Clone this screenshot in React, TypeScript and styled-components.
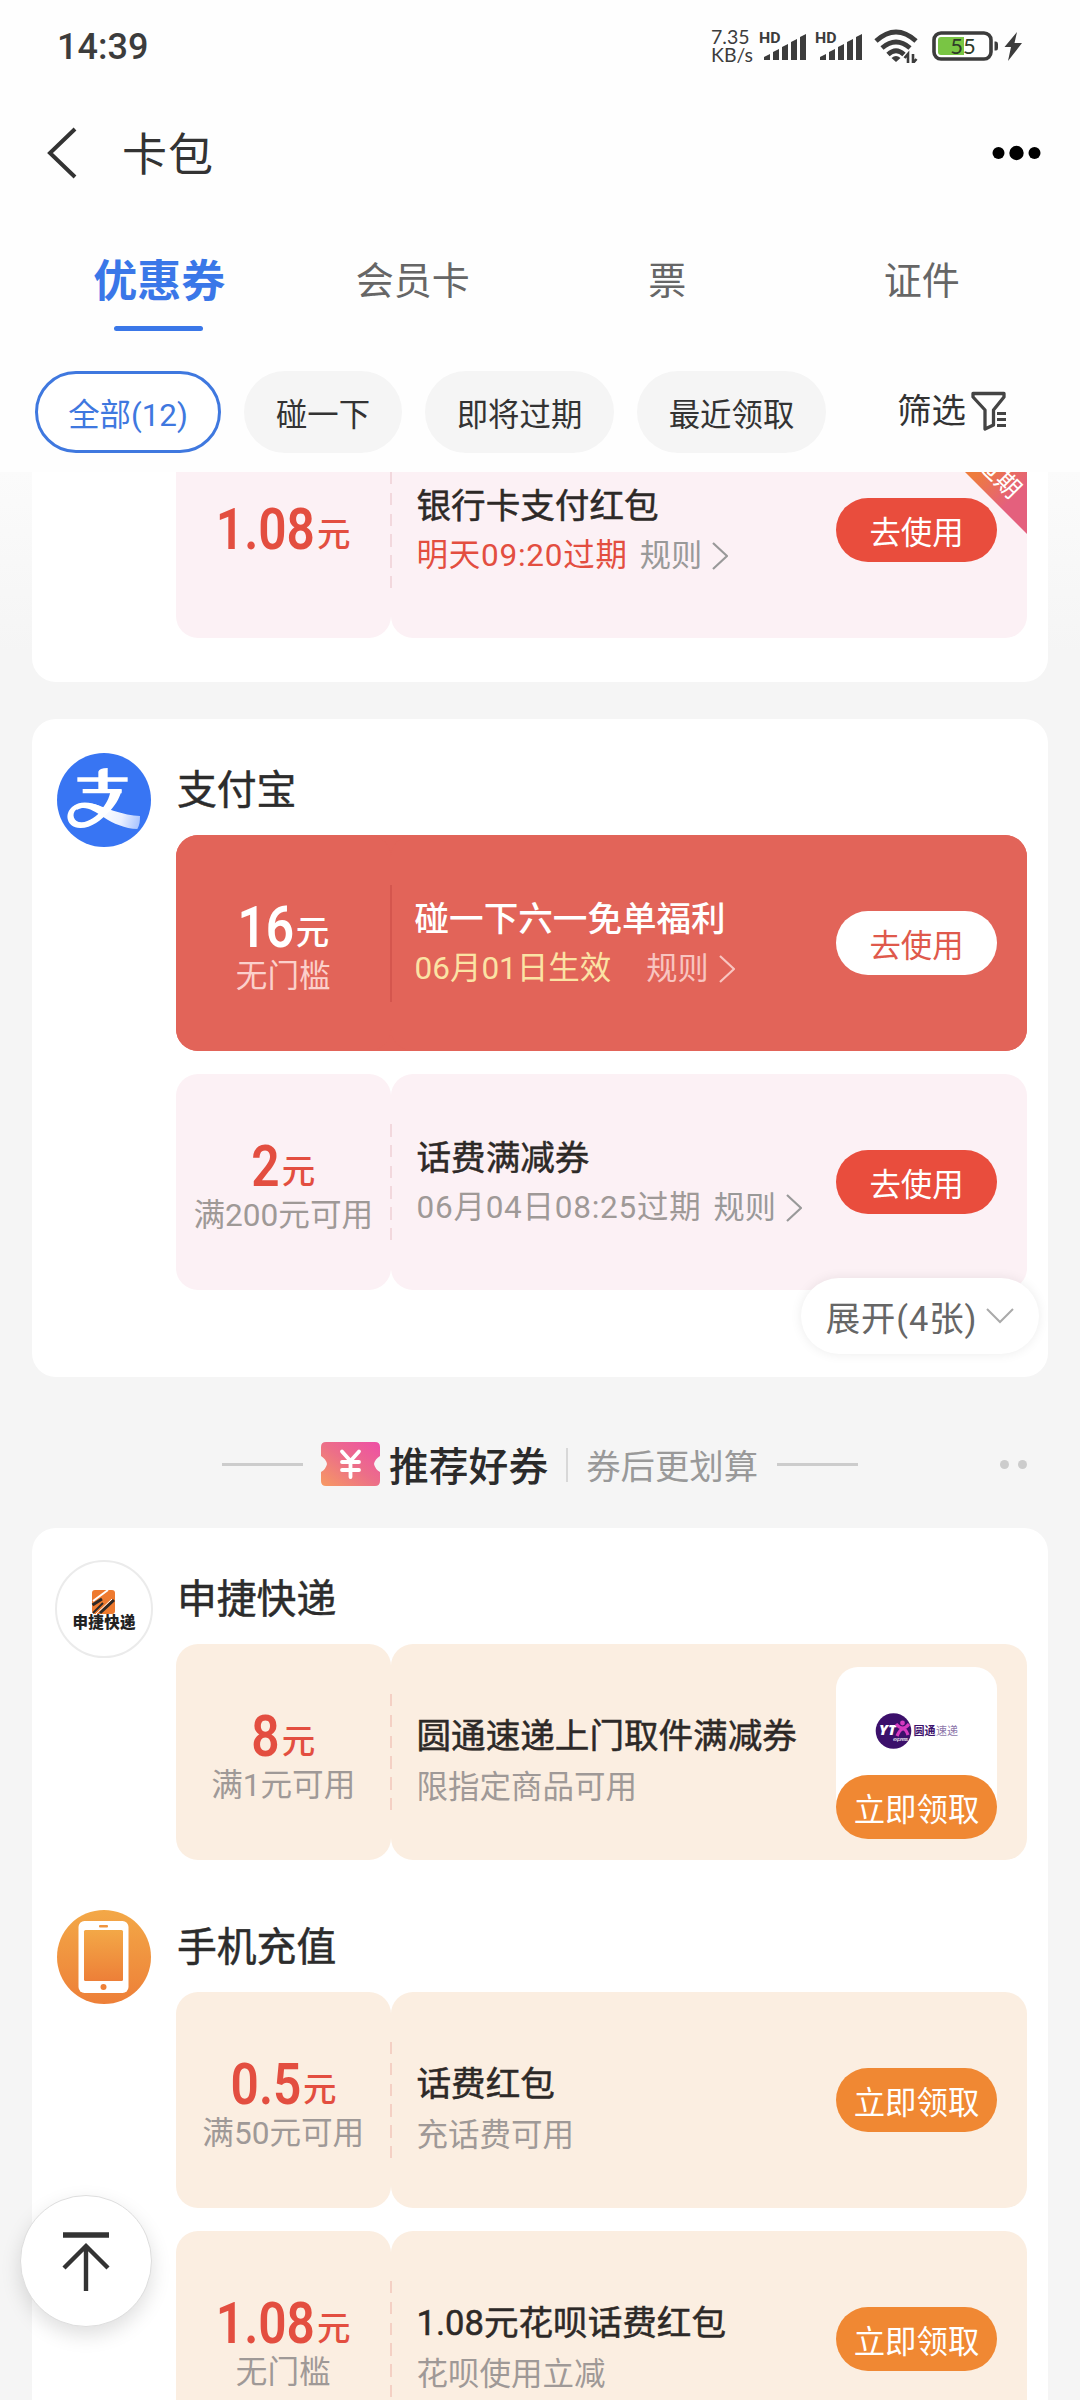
import React from "react";
import styled, { createGlobalStyle, css } from "styled-components";

const GlobalStyle = createGlobalStyle`
  * { box-sizing: border-box; }
  html, body { margin: 0; padding: 0; background: #f5f5f5; }
  body { font-family: Roboto, "Noto Sans CJK SC", sans-serif; color: #333; }
`;

const Screen = styled.div`
  width: 1080px;
  height: 2400px;
  overflow: hidden;
  display: flex;
  flex-direction: column;
  position: relative;
  background: #f5f5f5;
`;

const Header = styled.header`
  flex: none;
  height: 472px;
  background: #fefefe;
  display: flex;
  flex-direction: column;
`;

/* ---------- status bar ---------- */
const StatusBar = styled.div`
  height: 92px;
  padding: 0 58px 0 57px;
  display: flex;
  align-items: center;
  justify-content: space-between;
`;
const Clock = styled.div`
  font-size: 36px;
  font-weight: 500;
  line-height: 40px;
  padding-top: 1px;
  color: #3c3c3c;
`;
const StatusIcons = styled.div`
  display: flex;
  align-items: center;
`;
const NetSpeed = styled.div`
  width: 48px;
  font-family: Lato, Roboto, sans-serif;
  font-size: 19.5px;
  line-height: 18px;
  color: #3c3c3c;
  white-space: nowrap;
`;
const SignalSvg = styled.svg`
  width: 48px;
  height: 32px;
  margin-right: 8px;
  overflow: visible;
`;
const WifiSvg = styled.svg`
  width: 45px;
  height: 34px;
  margin-left: 3px;
`;
const BatterySvg = styled.svg`
  width: 90px;
  height: 32px;
  margin-left: 13px;
`;

/* ---------- navigation ---------- */
const NavBar = styled.div`
  height: 122px;
  padding: 0 38px 0 46px;
  display: flex;
  align-items: center;
`;
const BackSvg = styled.svg`
  width: 32px;
  height: 52px;
`;
const PageTitle = styled.h1`
  margin: 0 0 0 44px;
  padding-top: 5px;
  flex: 1;
  font-size: 45px;
  font-weight: 400;
  line-height: 60px;
  letter-spacing: 1px;
  color: #333;
`;
const MoreSvg = styled.svg`
  width: 50px;
  height: 18px;
`;

const Tabs = styled.nav`
  height: 157px;
  padding: 0 31px;
  display: grid;
  grid-template-columns: repeat(4, 1fr);
`;
const Tab = styled.div<{ $active?: boolean }>`
  display: flex;
  flex-direction: column;
  align-items: center;
  padding-top: 37px;
  font-size: ${(p) => (p.$active ? 44 : 38)}px;
  font-weight: ${(p) => (p.$active ? 700 : 400)};
  line-height: 60px;
  color: ${(p) => (p.$active ? "#3a77e8" : "#666")};
`;
const ActiveLabel = styled.span`
  padding: 1px 0 0 2px;
`;
const Indicator = styled.div`
  width: 89px;
  height: 5px;
  margin-top: 14px;
  border-radius: 3px;
  background: #3a77e8;
`;

const FilterRow = styled.div`
  height: 82px;
  padding-left: 35px;
  display: flex;
  gap: 23px;
`;
const Chip = styled.div<{ $width: number; $active?: boolean }>`
  width: ${(p) => p.$width}px;
  height: 82px;
  border-radius: 41px;
  display: flex;
  align-items: center;
  justify-content: center;
  font-size: 31.4px;
  white-space: nowrap;
  ${(p) =>
    p.$active
      ? css`
          border: 3px solid #3f78df;
          color: #3f78df;
          background: #fff;
        `
      : css`
          background: #f5f5f5;
          color: #333;
        `}
`;
const FilterButton = styled.div`
  margin-left: 48px;
  display: flex;
  align-items: center;
  gap: 4px;
  font-size: 34.5px;
  line-height: 50px;
  padding-bottom: 2px;
  color: #333;
`;
const FilterSvg = styled.svg`
  width: 38px;
  height: 40px;
`;

/* ---------- content ---------- */
const Content = styled.main`
  flex: 1;
  min-height: 0;
  overflow: hidden;
  display: flex;
  flex-direction: column;
  padding: 0 32px;
  background: linear-gradient(#fbfbfb, #f5f5f5 180px);
`;
const Card = styled.section<{ $bottom: number; $cut?: boolean }>`
  flex: none;
  background: #fff;
  border-radius: 24px;
  padding: 0 21px ${(p) => p.$bottom}px 21px;
  margin-top: ${(p) => (p.$cut ? -50 : 0)}px;
  position: relative;
`;
const Gap = styled.div`
  flex: none;
  height: 37px;
`;
const Group = styled.div<{ $spaced?: boolean }>`
  display: grid;
  grid-template-columns: 123px 851px;
  margin-top: ${(p) => (p.$spaced ? 16 : 0)}px;
`;
const LogoCell = styled.div`
  padding: 32px 0 0 2px;
`;
const LogoSvg = styled.svg`
  display: block;
  width: 98px;
  height: 98px;
`;
const GroupBody = styled.div`
  grid-column: 2;
`;
const BrandName = styled.h2`
  margin: 0;
  height: 116px;
  padding: 42px 0 0 1px;
  font-size: 39.8px;
  font-weight: 400;
  line-height: 60px;
  color: #2c2c2c;
  -webkit-text-stroke: 0.5px currentColor;
`;
const CouponList = styled.div`
  display: flex;
  flex-direction: column;
  gap: 23px;
`;

type Tone = "pink" | "hero" | "orange";
const surface = { pink: "#fcf1f5", hero: "#e26459", orange: "#fbeee1" };

const CouponBox = styled.div<{ $tone: Tone }>`
  height: 216px;
  display: flex;
  position: relative;
  border-radius: 22px;
  background: ${(p) => (p.$tone === "hero" ? surface.hero : "transparent")};
`;
const AmountPane = styled.div<{ $tone: Tone }>`
  width: 214.5px;
  border-radius: 22px;
  background: ${(p) => surface[p.$tone]};
  display: flex;
  flex-direction: column;
  align-items: center;
  justify-content: center;
  color: ${(p) => (p.$tone === "hero" ? "#fff" : "#e34e40")};
`;
const Amount = styled.div`
  display: flex;
  align-items: baseline;
  justify-content: center;
  height: 50px;
  line-height: 50px;
`;
const Digits = styled.span<{ $trim: number }>`
  display: block;
  font-size: 57px;
  font-weight: 600;
  transform: scaleX(0.87);
  transform-origin: right;
  margin-left: -${(p) => p.$trim}px;
`;
const Unit = styled.span`
  font-size: 33.5px;
  font-weight: 500;
  margin-left: 2px;
  transform: translateY(-3px);
`;
const Condition = styled.div<{ $tone: Tone }>`
  height: 40px;
  margin-bottom: -9px;
  line-height: 48px;
  font-size: 31.6px;
  white-space: nowrap;
  color: ${(p) => (p.$tone === "hero" ? "#fbd0cb" : "#9f9997")};
`;
const Divider = styled.div<{ $tone: Tone }>`
  width: 2px;
  height: 117px;
  margin: 50px -1px 0 -1px;
  z-index: 1;
  background: ${(p) =>
    p.$tone === "hero"
      ? "#d4564e"
      : `repeating-linear-gradient(${
          p.$tone === "pink" ? "#f2d8dd" : "#f4d0c4"
        } 0 12.5px, transparent 12.5px 20.8px)`};
`;
const InfoPane = styled.div<{ $tone: Tone }>`
  flex: 1;
  border-radius: 22px;
  background: ${(p) => surface[p.$tone]};
  display: flex;
  justify-content: space-between;
  padding: 0 30px 0 ${(p) => (p.$tone === "hero" ? 24 : 26)}px;
`;
const Info = styled.div<{ $tone: Tone }>`
  padding-top: ${(p) => (p.$tone === "orange" ? 67 : 59)}px;
  white-space: nowrap;
`;
const CouponTitle = styled.div<{ $tone: Tone }>`
  font-size: 34.6px;
  line-height: 50px;
  font-weight: ${(p) => (p.$tone === "hero" ? 500 : 400)};
  color: ${(p) => (p.$tone === "hero" ? "#fff" : "#2d2927")};
  -webkit-text-stroke: ${(p) => (p.$tone === "hero" ? 0 : 0.5)}px currentColor;
`;
const CouponSub = styled.div<{ $color: string; $tone: Tone }>`
  display: flex;
  align-items: center;
  height: 50px;
  margin-top: ${(p) => (p.$tone === "orange" ? 2 : 0)}px;
  line-height: 50px;
  font-size: 31.5px;
  letter-spacing: ${(p) => (p.$tone === "pink" ? 0.75 : 0)}px;
  color: ${(p) => p.$color};
`;
const Rule = styled.span<{ $tone: Tone }>`
  display: flex;
  align-items: center;
  letter-spacing: 0;
  margin-left: ${(p) => (p.$tone === "hero" ? 35 : 12)}px;
  font-size: 31.2px;
  color: ${(p) => (p.$tone === "hero" ? "#f8c5c0" : "#999")};
`;
const RuleSvg = styled.svg`
  width: 17px;
  height: 28px;
  margin-left: 9px;
`;
const ActionColumn = styled.div`
  width: 161px;
  display: flex;
  flex-direction: column;
  justify-content: center;
`;
const MerchantColumn = styled(ActionColumn)`
  justify-content: flex-start;
  padding-top: 23px;
`;
const MerchantBox = styled.div`
  height: 140px;
  margin-bottom: -32px;
  border-radius: 22px 22px 0 0;
  background: #fff;
  display: flex;
`;
const MerchantSvg = styled.svg`
  width: 161px;
  height: 108px;
`;
const Action = styled.div<{ $tone: Tone }>`
  height: 64px;
  border-radius: 32px;
  display: flex;
  align-items: center;
  justify-content: center;
  z-index: 1;
  font-size: 31.4px;
  background: ${(p) =>
    ({ pink: "#e94d3d", hero: "#fff", orange: "#f08833" })[p.$tone]};
  color: ${(p) => (p.$tone === "hero" ? "#df594c" : "#fff")};
`;
const Ribbon = styled.div`
  position: absolute;
  top: 0;
  right: 0;
  width: 112px;
  height: 112px;
  overflow: hidden;
  clip-path: polygon(0 0, 100% 0, 100% 100%);
  background: linear-gradient(135deg, #ee7c3c 50%, #e4607d 78%);
`;
const RibbonText = styled.span`
  position: absolute;
  left: 10px;
  top: 22px;
  width: 112px;
  text-align: center;
  transform: rotate(45deg);
  font-size: 25px;
  line-height: 30px;
  color: #fff;
  white-space: nowrap;
`;
const ExpandPill = styled.div`
  position: absolute;
  right: 9px;
  bottom: 23px;
  width: 238px;
  height: 76px;
  border-radius: 38px;
  background: #fff;
  box-shadow: 0 0 12px rgba(0, 0, 0, 0.08);
  display: flex;
  align-items: center;
  justify-content: center;
  gap: 9px;
  font-size: 34.4px;
  letter-spacing: 0.9px;
  color: #666;
`;
const ExpandSvg = styled.svg`
  width: 28px;
  height: 18px;
`;

const SectionHead = styled.div`
  flex: none;
  height: 151px;
  padding-top: 24px;
  display: flex;
  align-items: center;
  padding-left: 190px;
`;
const Rail = styled.div`
  width: 81px;
  height: 3px;
  background: #ccc;
`;
const TicketSvg = styled.svg`
  width: 59px;
  height: 44px;
  margin: -2px 9px 0 18px;
`;
const SectionTitle = styled.div`
  font-size: 39.8px;
  font-weight: 500;
  margin-top: -2px;
  color: #2b2b2b;
`;
const Split = styled.div`
  width: 2px;
  height: 34px;
  margin: 0 18px;
  background: #d8d8d8;
`;
const SectionNote = styled.div`
  font-size: 34.4px;
  color: #999;
  margin: -2px 19px 0 0;
`;
const SectionDots = styled.div`
  display: flex;
  gap: 9px;
  margin-left: 142px;
`;
const SmallDot = styled.i`
  width: 9px;
  height: 9px;
  border-radius: 50%;
  background: #ccc;
`;

const BackToTop = styled.button`
  position: absolute;
  left: 20px;
  top: 2195px;
  width: 132px;
  height: 132px;
  padding: 0;
  border: 1px solid #dedede;
  border-radius: 50%;
  background: #fff;
  box-shadow: 0 8px 20px rgba(0, 0, 0, 0.13);
  display: flex;
  align-items: center;
  justify-content: center;
`;
const TopSvg = styled.svg`
  width: 52px;
  height: 62px;
`;

/* ---------- icons ---------- */
function Signal() {
  return (
    <SignalSvg viewBox="0 0 48 32" fill="#3c3c3c">
      <text x="0" y="12.500" fontSize="14.500" fontWeight="700" fontFamily="Roboto" textLength="21.500" lengthAdjust="spacingAndGlyphs">HD</text>
      {[0, 1, 2, 3, 4].map((i) => {
        const x = 5 + i * 9;
        const y = 24 - i * 5;
        return <path key={i} d={`M${x} ${y + 3}L${x + 6} ${y}V30H${x}Z`} />;
      })}
    </SignalSvg>
  );
}

function Wifi() {
  return (
    <WifiSvg viewBox="0 0 45 34" fill="none" stroke="#3c3c3c" strokeWidth="4.800">
      <path d="M2 12Q22 -6 42 12" />
      <path d="M8 19Q22 7 36 19" />
      <path d="M14 25.500Q22 18 30 25.500" />
      <path d="M17.500 29Q22 25 26.500 29L22 33Z" fill="#3c3c3c" stroke="none" />
      <path d="M34 34V25L30.500 29M39 25V34L42.500 30" strokeWidth="2.600" />
    </WifiSvg>
  );
}

function Battery() {
  return (
    <BatterySvg viewBox="0 0 90 32">
      <rect x="2" y="3" width="57" height="26" rx="7" fill="#fff" stroke="#3c3c3c" strokeWidth="3.600" />
      <path d="M9 7H32V25H9Q6 25 6 22V10Q6 7 9 7Z" fill="#79c544" />
      <text x="31" y="24" fontSize="22" textAnchor="middle" fontFamily="Lato" fill="#2e3a28">55</text>
      <path d="M62.500 11.500H64Q66 11.500 66 14V18Q66 20.500 64 20.500H62.500Z" fill="#3c3c3c" />
      <path d="M85 2L72.500 17H79L76 31L90 13H82.500Z" fill="#3c3c3c" />
    </BatterySvg>
  );
}

function AlipayLogo() {
  return (
    <LogoSvg viewBox="15 18 294 294">
      <defs>
        <linearGradient id="tail" x1="150" y1="200" x2="268" y2="235" gradientUnits="userSpaceOnUse">
          <stop offset="0" stopColor="#fff" />
          <stop offset=".55" stopColor="#eaf0ff" />
          <stop offset="1" stopColor="#a9c4ff" />
        </linearGradient>
      </defs>
      <circle cx="162" cy="165" r="141" fill="#3875f3" />
      <path
        d="M66 188C100 158 148 182 190 197C220 206 245 212 270 213C270 228 269 240 262 252C225 251 190 236 160 216C130 196 105 180 82 194Z"
        fill="url(#tail)"
      />
      <path d="M82 97H233V110H82ZM98 132H215V145H98Z" fill="#fff" />
      <path d="M145 80Q147 70 173 69V138H145Z" fill="#fff" />
      <path d="M182 136H215C207 164 194 184 176 202L150 198C168 180 178 160 182 136Z" fill="#fff" />
      <path
        d="M178 198C155 226 122 250 90 249C50 247 42 207 66 186C90 165 122 171 152 184L150 200C122 188 96 180 78 194C64 206 70 232 95 232C118 230 140 214 156 194Z"
        fill="#fff"
      />
    </LogoSvg>
  );
}

function ShenjieLogo() {
  return (
    <LogoSvg viewBox="0 0 98 98">
      <circle cx="49" cy="49" r="48" fill="#fff" stroke="#ebebeb" strokeWidth="2" />
      <rect x="37" y="30" width="23" height="24" rx="3" fill="#ee7a2f" />
      <path d="M38 41L53 30" stroke="#fff" strokeWidth="2" />
      <path d="M37.500 45L47 39M45 53L59 40" stroke="#2d2926" strokeWidth="3" />
      <path d="M38 53L48 43" stroke="#2d2926" strokeWidth="2" />
      <path d="M41 54L57 39" stroke="#fff" strokeWidth="1" />
      <text x="49" y="68" fontSize="15.500" fontWeight="900" textAnchor="middle" fill="#222" fontFamily="Noto Sans CJK SC" textLength="63">
        申捷快递
      </text>
    </LogoSvg>
  );
}

function PhoneLogo() {
  return (
    <LogoSvg viewBox="0 0 98 98">
      <defs>
        <linearGradient id="phone" x1="0" y1="0" x2="0" y2="1">
          <stop offset="0" stopColor="#f3a847" />
          <stop offset="1" stopColor="#ed7f38" />
        </linearGradient>
      </defs>
      <circle cx="49" cy="49" r="47" fill="url(#phone)" />
      <rect x="23.500" y="13" width="50" height="72" rx="6" fill="#fff" />
      <rect x="29" y="22" width="39" height="51" rx="1.500" fill="url(#phone)" />
      <rect x="44" y="17" width="9" height="2.500" rx="1" fill="#f0953f" />
      <circle cx="48.500" cy="79" r="3" fill="#ee8138" />
    </LogoSvg>
  );
}

function YtoLogo() {
  return (
    <MerchantSvg viewBox="0 0 161 108">
      <circle cx="57.500" cy="64" r="17.800" fill="#3c106b" />
      <text x="43" y="68" fontSize="14" fontWeight="800" fontStyle="italic" fill="#fff" textLength="17" lengthAdjust="spacingAndGlyphs" fontFamily="Open Sans">YT</text>
      <path d="M60 57Q67 65 73 57M61 69Q64 62 67 62Q70 62 72 68" fill="none" stroke="#d63ac0" strokeWidth="3.200" />
      <circle cx="66.500" cy="56" r="2.400" fill="#d63ac0" />
      <text x="57" y="74" fontSize="6" fontStyle="italic" fill="#fff" textLength="15" fontFamily="Open Sans">express</text>
      <text y="67.500" fontSize="11" fontWeight="700" fontFamily="Noto Sans CJK SC">
        <tspan x="77.500" fill="#3c106b">圆通</tspan>
        <tspan x="100" fill="#8d76aa" fontWeight="400">速递</tspan>
      </text>
    </MerchantSvg>
  );
}

/* ---------- coupon ---------- */
interface CouponProps {
  tone: Tone;
  amount: string;
  condition?: string;
  title: string;
  sub: string;
  subColor?: string;
  rule?: boolean;
  ribbon?: boolean;
  merchant?: boolean;
}

// Width removed on the left by condensing the figures.
const trimFor = (text: string) =>
  [...text].reduce((w, c) => w + (c === "." ? 16 : 32.6), 0) * 0.13;

function Coupon({ tone, amount, condition, title, sub, subColor = "#9f9997", rule, ribbon, merchant }: CouponProps) {
  const action = <Action $tone={tone}>{tone === "orange" ? "立即领取" : "去使用"}</Action>;
  return (
    <CouponBox $tone={tone}>
      <AmountPane $tone={tone}>
        <Amount>
          <Digits $trim={trimFor(amount)}>{amount}</Digits>
          <Unit>元</Unit>
        </Amount>
        {condition && <Condition $tone={tone}>{condition}</Condition>}
      </AmountPane>
      <Divider $tone={tone} />
      <InfoPane $tone={tone}>
        <Info $tone={tone}>
          <CouponTitle $tone={tone}>{title}</CouponTitle>
          <CouponSub $color={subColor} $tone={tone}>
            {sub}
            {rule && (
              <Rule $tone={tone}>
                规则
                <RuleSvg viewBox="0 0 17 28" fill="none" stroke="currentColor" strokeWidth="2.200">
                  <path d="M2 1L16 14L2 27" />
                </RuleSvg>
              </Rule>
            )}
          </CouponSub>
        </Info>
        {merchant ? (
          <MerchantColumn>
            <MerchantBox>
              <YtoLogo />
            </MerchantBox>
            {action}
          </MerchantColumn>
        ) : (
          <ActionColumn>{action}</ActionColumn>
        )}
      </InfoPane>
      {ribbon && (
        <Ribbon>
          <RibbonText>即将过期</RibbonText>
        </Ribbon>
      )}
    </CouponBox>
  );
}

export default function App() {
  return (
    <Screen>
      <GlobalStyle />
      <Header>
        <StatusBar>
          <Clock>14:39</Clock>
          <StatusIcons>
            <NetSpeed>
              7.35
              <br />
              KB/s
            </NetSpeed>
            <Signal />
            <Signal />
            <Wifi />
            <Battery />
          </StatusIcons>
        </StatusBar>
        <NavBar>
          <BackSvg viewBox="0 0 32 52" fill="none" stroke="#333" strokeWidth="4">
            <path d="M29 2L4 26L29 50" />
          </BackSvg>
          <PageTitle>卡包</PageTitle>
          <MoreSvg viewBox="0 0 50 18">
            <circle cx="6.500" cy="9" r="6" />
            <circle cx="24.500" cy="9" r="7.200" />
            <circle cx="42.500" cy="9" r="6" />
          </MoreSvg>
        </NavBar>
        <Tabs>
          <Tab $active>
            <ActiveLabel>优惠券</ActiveLabel>
            <Indicator />
          </Tab>
          <Tab>会员卡</Tab>
          <Tab>票</Tab>
          <Tab>证件</Tab>
        </Tabs>
        <FilterRow>
          <Chip $width={186} $active>全部(12)</Chip>
          <Chip $width={158}>碰一下</Chip>
          <Chip $width={189}>即将过期</Chip>
          <Chip $width={189}>最近领取</Chip>
          <FilterButton>
            筛选
            <FilterSvg viewBox="0 0 38 40" fill="none" stroke="#444" strokeWidth="3.300">
              <path d="M3 2.500H34V6L23.500 19V34L15 38V19L3 6Z" strokeLinejoin="round" />
              <path d="M27 22.500H36M27 28.500H36M27 34.500H36" strokeWidth="3" />
            </FilterSvg>
          </FilterButton>
        </FilterRow>
      </Header>

      <Content>
        <Card $bottom={44} $cut>
          <Group>
            <GroupBody>
              <Coupon tone="pink" amount="1.08" title="银行卡支付红包" sub="明天09:20过期" subColor="#e34e40" rule ribbon />
            </GroupBody>
          </Group>
        </Card>
        <Gap />
        <Card $bottom={87}>
          <Group>
            <LogoCell>
              <AlipayLogo />
            </LogoCell>
            <GroupBody>
              <BrandName>支付宝</BrandName>
              <CouponList>
                <Coupon tone="hero" amount="16" condition="无门槛" title="碰一下六一免单福利" sub="06月01日生效" subColor="#fbe3a4" rule />
                <Coupon tone="pink" amount="2" condition="满200元可用" title="话费满减券" sub="06月04日08:25过期" rule />
              </CouponList>
            </GroupBody>
          </Group>
          <ExpandPill>
            展开(4张)
            <ExpandSvg viewBox="0 0 28 18" fill="none" stroke="#aaa" strokeWidth="2">
              <path d="M1 2L14 15L27 2" />
            </ExpandSvg>
          </ExpandPill>
        </Card>

        <SectionHead>
          <Rail />
          <TicketSvg viewBox="0 0 59 44">
            <defs>
              <linearGradient id="ticket" x1="0" y1="1" x2="1" y2="0">
                <stop offset="0" stopColor="#f79a62" />
                <stop offset=".5" stopColor="#ec6f88" />
                <stop offset="1" stopColor="#ee4ea6" />
              </linearGradient>
            </defs>
            <path
              d="M5 0H54Q59 0 59 5V14Q54 17 53 22Q54 27 59 30V39Q59 44 54 44H5Q0 44 0 39V30Q5 27 6 22Q5 17 0 14V5Q0 0 5 0Z"
              fill="url(#ticket)"
            />
            <path d="M21 9.500L29.500 19L38 9.500M29.500 19V35M21 20H38M21 28H38" fill="none" stroke="#fff" strokeWidth="3.800" strokeLinecap="round" />
          </TicketSvg>
          <SectionTitle>推荐好券</SectionTitle>
          <Split />
          <SectionNote>券后更划算</SectionNote>
          <Rail />
          <SectionDots>
            <SmallDot />
            <SmallDot />
          </SectionDots>
        </SectionHead>

        <Card $bottom={44}>
          <Group>
            <LogoCell>
              <ShenjieLogo />
            </LogoCell>
            <GroupBody>
              <BrandName>申捷快递</BrandName>
              <Coupon tone="orange" amount="8" condition="满1元可用" title="圆通速递上门取件满减券" sub="限指定商品可用" merchant />
            </GroupBody>
          </Group>
          <Group $spaced>
            <LogoCell>
              <PhoneLogo />
            </LogoCell>
            <GroupBody>
              <BrandName>手机充值</BrandName>
              <CouponList>
                <Coupon tone="orange" amount="0.5" condition="满50元可用" title="话费红包" sub="充话费可用" />
                <Coupon tone="orange" amount="1.08" condition="无门槛" title="1.08元花呗话费红包" sub="花呗使用立减" />
              </CouponList>
            </GroupBody>
          </Group>
        </Card>
      </Content>

      <BackToTop aria-label="返回顶部">
        <TopSvg viewBox="0 0 52 62" fill="none" stroke="#333" strokeWidth="4.400">
          <path d="M3 5H49" strokeWidth="5.400" />
          <path d="M26 61V16M4 38L26 16L48 38" />
        </TopSvg>
      </BackToTop>
    </Screen>
  );
}
